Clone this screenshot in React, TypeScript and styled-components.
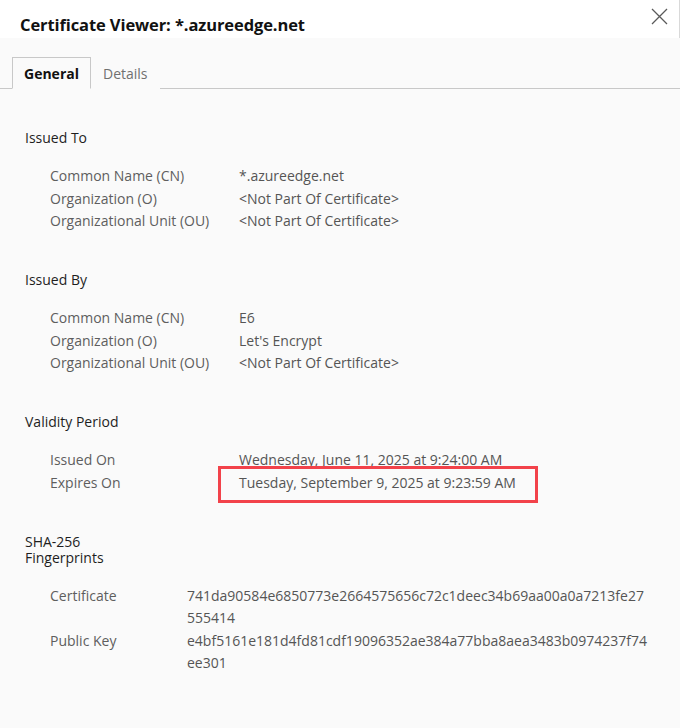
import React from 'react';
import styled, { createGlobalStyle } from 'styled-components';

const GlobalStyle = createGlobalStyle`
  html, body {
    margin: 0;
    padding: 0;
    background: #fafafa;
  }
  body {
    font-family: 'Open Sans', 'Noto Sans', sans-serif;
  }
`;

const Dialog = styled.div`
  width: 680px;
  height: 728px;
  background-color: #fafafa;
  display: flex;
  flex-direction: column;
  overflow: hidden;
`;

const TitleBar = styled.header`
  height: 38px;
  flex: none;
  display: flex;
  align-items: flex-end;
  justify-content: space-between;
  background-color: #fff;
  border-right: 1px solid #d9d9d9;
  position: relative;
  padding-left: 20px;
  box-sizing: border-box;
`;

const Title = styled.h1`
  margin: 0 0 1px 0;
  font-size: 16.5px;
  font-weight: 700;
  line-height: 24px;
  color: #111;
  letter-spacing: -0.1px;
`;

const CloseButton = styled.button`
  position: absolute;
  top: 6px;
  right: 10px;
  width: 20px;
  height: 20px;
  padding: 0;
  border: 0;
  background: transparent;
  display: flex;
  align-items: center;
  justify-content: center;
  cursor: pointer;
`;

const TabStrip = styled.nav`
  display: flex;
  align-items: flex-end;
  height: 51px;
  padding-left: 12px;
  border-bottom: 1px solid #c8c8c8;
  box-sizing: border-box;
  flex: none;
`;

const Tab = styled.button<{ $active?: boolean }>`
  height: 32px;
  padding: 0 11px;
  margin-bottom: -1px;
  font-family: inherit;
  font-size: 14px;
  font-weight: ${p => (p.$active ? 700 : 400)};
  color: ${p => (p.$active ? '#111' : '#707070')};
  background-color: #fafafa;
  border: 1px solid ${p => (p.$active ? '#c8c8c8' : 'transparent')};
  border-bottom: 1px solid ${p => (p.$active ? '#fafafa' : 'transparent')};
  cursor: pointer;
  outline: none;
`;

const Content = styled.main`
  padding: 41px 0 0 25px;
`;

const Section = styled.section`
  margin-bottom: 39.5px;
`;

const SectionTitle = styled.h2<{ $narrow?: boolean }>`
  margin: 0 0 19px 0;
  font-size: 14px;
  font-weight: 400;
  line-height: 16px;
  color: #1e1e1e;
  max-width: ${p => (p.$narrow ? '90px' : 'none')};
`;

const Fields = styled.dl<{ $labelWidth: number }>`
  display: grid;
  grid-template-columns: ${p => p.$labelWidth}px 1fr;
  margin: 0;
  padding-left: 25px;
  font-size: 14px;
  line-height: 22.5px;
`;

const Label = styled.dt`
  margin: 0;
  color: #5e5e5e;
`;

const Value = styled.dd<{ $hash?: boolean }>`
  margin: 0;
  color: #555;
  position: relative;
  word-break: ${p => (p.$hash ? 'break-all' : 'normal')};
  max-width: ${p => (p.$hash ? '462px' : 'none')};
`;

const Highlight = styled.span`
  position: absolute;
  left: -21px;
  top: -6px;
  width: 320px;
  height: 37px;
  border: 3px solid #f2424a;
  box-sizing: border-box;
  pointer-events: none;
`;

type Field = { label: string; value: string; highlight?: boolean };

type Group = {
  title: string;
  labelWidth: number;
  hash?: boolean;
  narrow?: boolean;
  fields: Field[];
};

const groups: Group[] = [
  {
    title: 'Issued To',
    labelWidth: 189,
    fields: [
      { label: 'Common Name (CN)', value: '*.azureedge.net' },
      { label: 'Organization (O)', value: '<Not Part Of Certificate>' },
      { label: 'Organizational Unit (OU)', value: '<Not Part Of Certificate>' },
    ],
  },
  {
    title: 'Issued By',
    labelWidth: 189,
    fields: [
      { label: 'Common Name (CN)', value: 'E6' },
      { label: 'Organization (O)', value: "Let's Encrypt" },
      { label: 'Organizational Unit (OU)', value: '<Not Part Of Certificate>' },
    ],
  },
  {
    title: 'Validity Period',
    labelWidth: 189,
    fields: [
      { label: 'Issued On', value: 'Wednesday, June 11, 2025 at 9:24:00 AM' },
      { label: 'Expires On', value: 'Tuesday, September 9, 2025 at 9:23:59 AM', highlight: true },
    ],
  },
  {
    title: 'SHA-256 Fingerprints',
    labelWidth: 137,
    hash: true,
    narrow: true,
    fields: [
      { label: 'Certificate', value: '741da90584e6850773e2664575656c72c1deec34b69aa00a0a7213fe27555414' },
      { label: 'Public Key', value: 'e4bf5161e181d4fd81cdf19096352ae384a77bba8aea3483b0974237f74ee301' },
    ],
  },
];

const CloseIcon = () => (
  <svg width='17' height='17' viewBox='0 0 17 17'>
    <path d='M1 1 L16 16 M16 1 L1 16' stroke='#5a5a5a' strokeWidth='1.3' fill='none' />
  </svg>
);

const App: React.FC = () => {
  return (
    <>
      <GlobalStyle />
      <Dialog>
        <TitleBar>
          <Title>Certificate Viewer: *.azureedge.net</Title>
          <CloseButton type='button' aria-label='Close'>
            <CloseIcon />
          </CloseButton>
        </TitleBar>
        <TabStrip>
          <Tab type='button' $active>
            General
          </Tab>
          <Tab type='button'>Details</Tab>
        </TabStrip>
        <Content>
          {groups.map(group => (
            <Section key={group.title}>
              <SectionTitle $narrow={group.narrow}>{group.title}</SectionTitle>
              <Fields $labelWidth={group.labelWidth}>
                {group.fields.map(field => (
                  <React.Fragment key={field.label}>
                    <Label>{field.label}</Label>
                    <Value $hash={group.hash}>
                      {field.value}
                      {field.highlight && <Highlight />}
                    </Value>
                  </React.Fragment>
                ))}
              </Fields>
            </Section>
          ))}
        </Content>
      </Dialog>
    </>
  );
};

export default App;
